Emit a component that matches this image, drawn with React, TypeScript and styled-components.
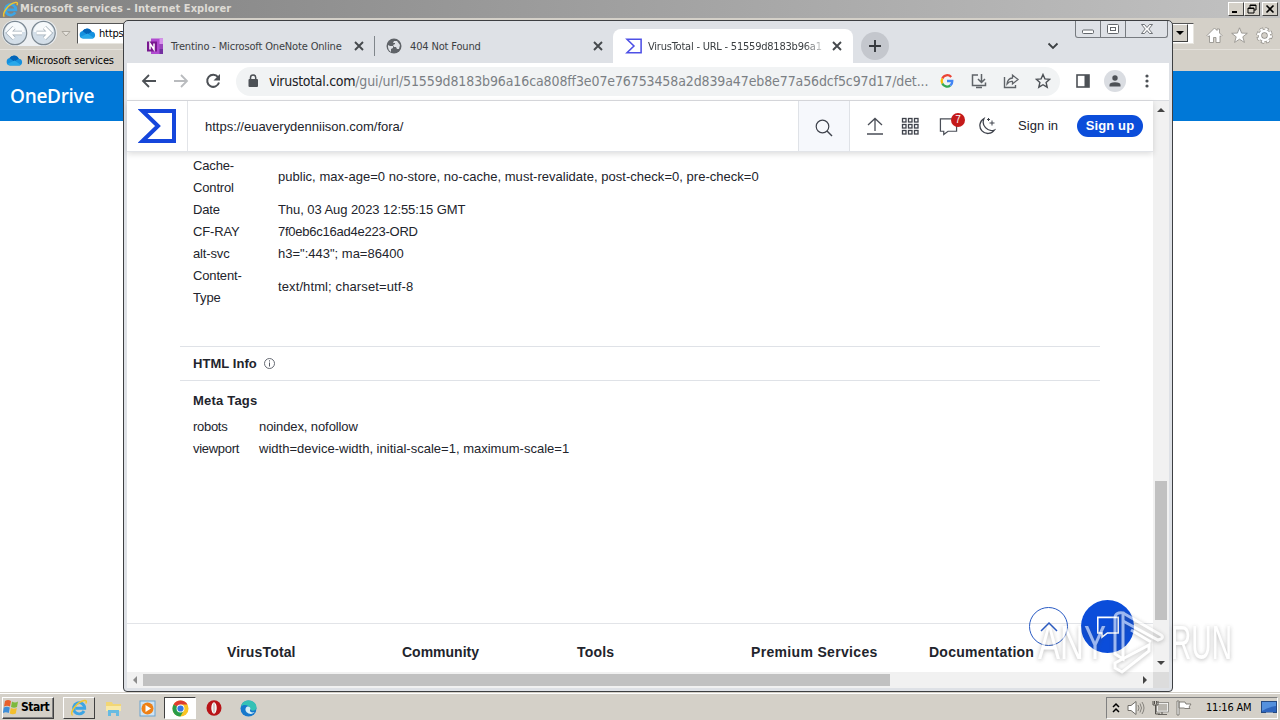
import React from 'react';
import styled, { createGlobalStyle } from 'styled-components';

const Global = createGlobalStyle`
  * { box-sizing: border-box; }
  html, body { margin: 0; padding: 0; overflow: hidden; }
  body { font-family: "DejaVu Sans Condensed", "DejaVu Sans", sans-serif; font-size: 11px; color: #000; }
  svg { display: block; flex: none; }
`;

const tahoma = '"DejaVu Sans Condensed", "DejaVu Sans", sans-serif';
const arial = '"Liberation Sans", Arial, sans-serif';

const Desktop = styled.div`
  position: relative; width: 1280px; height: 720px; overflow: hidden;
  display: flex; flex-direction: column; background: #fff;
`;
const Label = styled.span<{ $track?: number }>`
  white-space: pre; letter-spacing: ${p => p.$track ?? 0}px;
`;

/* Internet Explorer window */
const IeTitle = styled.div`
  height: 18px; flex: none; display: flex; align-items: center; padding: 0 2px 0 2px;
  background: linear-gradient(90deg, #808080, #c2c2c2); color: #dedbd5;
  font: bold 11px ${tahoma};
`;
const IeTitleText = styled(Label)` flex: 1; margin: -1px 0 0 1px; `;
const IeButton = styled.div<{ $gap?: number }>`
  width: 16px; height: 14px; margin-left: ${p => p.$gap ?? 0}px; background: #d4d0c8;
  border: 1px solid; border-color: #fff #404040 #404040 #fff;
  display: flex; align-items: center; justify-content: center;
`;
const IeNav = styled.div`
  height: 31px; flex: none; display: flex; align-items: center; background: #d4d0c8; padding-left: 2px;
`;
const NavCircles = styled.div` width: 72px; height: 30px; flex: none; margin-top: -1px; `;
const AddressBox = styled.div`
  width: 1117px; height: 21px; margin: 0 0 1px 3px; flex: none; display: flex; align-items: center;
  background: #fff; border: 1px solid; border-color: #555 #e8e6e0 #e8e6e0 #555; font-size: 11px; padding-left: 1px;
`;
const AddressText = styled(Label)` margin-left: 3px; flex: 1; `;
const DropButton = styled.div`
  width: 17px; height: 18px; margin-right: 5px; background: #d4d0c8;
  border: 1px solid; border-color: #fff #404040 #404040 #fff;
  display: flex; align-items: center; justify-content: center;
`;
const IeTools = styled.div` display: flex; gap: 8px; margin: 3px 0 0 12px; `;
const Favorites = styled.div`
  height: 22px; flex: none; display: flex; align-items: center; padding: 0 0 1px 6px; gap: 4px;
  background: #d4d0c8; border-top: 1px solid #e4e1db;
`;
const BlueBar = styled.div`
  height: 50px; flex: none; background: #0078d7; color: #fff; display: flex; align-items: center;
  padding: 0 0 0 10px; font: 600 19px "Open Sans", "Noto Sans", sans-serif;
`;
const IePage = styled.div` flex: 1; background: #fff; `;

/* Taskbar */
const Taskbar = styled.div`
  height: 28px; flex: none; display: flex; align-items: center; padding: 3px 2px 0 2px;
  background: #d4d0c8; border-top: 1px solid #d4d0c8; box-shadow: inset 0 1px #fff;
`;
const TaskButton = styled.div<{ $w: number; $mode: 'up' | 'down' | 'flat' }>`
  width: ${p => p.$w}px; height: 22px; flex: none; display: flex; align-items: center; justify-content: center;
  border: 1px solid;
  border-color: ${p => p.$mode === 'up' ? '#fff #404040 #404040 #fff' : p.$mode === 'down' ? '#404040 #fff #fff #404040' : 'transparent'};
  background: ${p => p.$mode === 'down' ? '#fff' : 'transparent'};
`;
const StartButton = styled(TaskButton)`
  gap: 2px; margin-right: 9px; justify-content: flex-start; font: bold 12px ${tahoma}; box-shadow: inset -1px -1px #808080;
  padding-bottom: 2px;
`;
const Tray = styled.div`
  width: 172px; height: 22px; margin-left: auto; display: flex; align-items: center;
  border: 1px solid; border-color: #808080 #fff #fff #808080; padding: 0 0 1px 5px;
`;
const TrayIcons = styled.div` display: flex; align-items: center; gap: 7px; `;
const Clock = styled(Label)` margin: 0 9px 0 13px; width: 46px; font-size: 11px; `;

/* Chrome window */
const ChromeWindow = styled.div`
  position: absolute; left: 123px; top: 20px; width: 1050px; height: 672px;
  border: 1px solid #3d3f42; border-radius: 5px 5px 4px 4px; background: #dee1e6;
  padding: 0 3px 3px; display: flex; flex-direction: column; overflow: hidden;
`;
const TabStrip = styled.div`
  height: 42px; flex: none; display: flex; align-items: flex-end; position: relative; color: #3c4043; font: 11px ${tahoma};
`;
const Tab = styled.div<{ $w: number; $left?: number; $active?: boolean }>`
  width: ${p => p.$w}px; height: 34px; flex: none; display: flex; align-items: center;
  padding: 0 ${p => (p.$active ? 10 : 9)}px 0 ${p => p.$left ?? 11}px; gap: ${p => (p.$active ? 6 : 8)}px;
  background: ${p => (p.$active ? '#fff' : 'transparent')};
  border-radius: 8px 8px 0 0;
`;
const TabTitle = styled(Label)<{ $fade?: boolean }>`
  flex: 1;
  mask-image: ${p => (p.$fade ? 'linear-gradient(90deg, #000 88%, rgba(0,0,0,.25) 98%)' : 'none')};
`;
const TabSeparator = styled.div` width: 1px; height: 20px; margin-bottom: 7px; background: #80868b; `;
const NewTab = styled.div`
  width: 28px; height: 28px; margin: 0 0 3px 8px; border-radius: 50%; background: #c4c7cd;
  display: flex; align-items: center; justify-content: center;
`;
const TabSearch = styled.div` margin: 0 0 12px 158px; `;
const WindowControls = styled.div`
  position: absolute; right: 1px; top: 0; height: 17px; display: flex;
  border: 1px solid #777b80; border-top: 0; border-radius: 0 0 3px 3px;
`;
const WindowControl = styled.div<{ $w: number }>`
  width: ${p => p.$w}px; display: flex; align-items: center; justify-content: center;
  & + & { border-left: 1px solid #777b80; }
`;
const Toolbar = styled.div`
  height: 38px; flex: none; display: flex; align-items: center; background: #fff;
  border-bottom: 1px solid #dadce0; padding-left: 14px;
`;
const NavIcons = styled.div` display: flex; gap: 16px; margin: -1px 15px 0 0; `;
const Omnibox = styled.div`
  width: 824px; height: 29px; border-radius: 15px; background: #f1f3f4; display: flex; align-items: center; padding: 0 9px 1px 11px;
`;
const Url = styled.div` flex: 1; margin-left: 10px; white-space: pre; font: 14px ${tahoma}; letter-spacing: -0.11px; color: #7b7f84; `;
const UrlHost = styled.span` color: #202124; letter-spacing: -0.3px; `;
const OmniIcons = styled.div` display: flex; gap: 14px; `;
const ToolIcons = styled.div` display: flex; align-items: center; gap: 14px; margin: -1px 0 0 16px; `;
const Avatar = styled.div`
  width: 22px; height: 22px; border-radius: 50%; background: #dadde2; display: flex; align-items: center; justify-content: center;
`;
const Viewport = styled.div` flex: 1; min-height: 0; display: flex; background: #fff; `;
const Page = styled.div`
  width: 1026px; flex: none; display: flex; flex-direction: column; font: 13px ${arial}; color: #22242c; background: #fff; position: relative;
`;
const Header = styled.div`
  height: 51px; flex: none; display: flex; align-items: center; border-bottom: 1px solid #e2e4e8; box-shadow: 0 2px 6px rgba(0,0,0,.14);
`;
const LogoCell = styled.div`
  width: 61px; height: 50px; border-right: 1px solid #e2e4e8; padding: 8px 0 0 11px;
`;
const Query = styled.div` width: 610px; padding-left: 17px; `;
const SearchCell = styled.div`
  width: 52px; height: 50px; border: 1px solid #dfe2e7; border-width: 0 1px; background: #f6f8fc;
  display: flex; align-items: center; justify-content: center; padding-top: 3px;
`;
const HeaderIcons = styled.div` display: flex; align-items: center; gap: 17px; margin-left: 16px; `;
const Chat = styled.div` position: relative; margin: 0 3px 0 3px; `;
const Badge = styled.div`
  position: absolute; left: 12px; top: -4px; width: 14px; height: 14px; border-radius: 50%; background: #c51a1a; color: #fff;
  font: 10px/14px ${arial}; text-align: center;
`;
const SignIn = styled(Label)` width: 41px; margin: -1px 0 0 22px; font-size: 13px; `;
const SignUp = styled.div`
  width: 66px; height: 22px; border-radius: 11px; background: #0b4dda; color: #fff; margin-left: 18px;
  font: bold 13px/22px ${arial}; text-align: center; letter-spacing: .1px;
`;
const Content = styled.div` height: 471px; padding: 3px 53px 0; flex: none; `;
const Row = styled.div` display: flex; align-items: center; padding-left: 13px; line-height: 22px; `;
const Key = styled.div<{ $w: number; $track?: number }>`
  width: ${p => p.$w}px; flex: none; letter-spacing: ${p => p.$track ?? -0.15}px;
`;
const Section = styled.div`
  height: 35px; margin-top: 37px; padding: 0 0 1px 13px; display: flex; align-items: center; gap: 7px;
  border-top: 1px solid #dfe2e7; border-bottom: 1px solid #dfe2e7; font-weight: bold;
`;
const SubTitle = styled.div` height: 35px; padding: 9px 0 0 13px; line-height: 22px; font-weight: bold; `;
const Footer = styled.div`
  flex: 1; border-top: 1px solid #e2e4e8; display: flex; font-size: 14px; font-weight: bold; padding: 19px 0 0 100px; line-height: 18px;
`;
const FooterColumn = styled.div<{ $w: number; $track: number }>`
  width: ${p => p.$w}px; flex: none; white-space: nowrap; letter-spacing: ${p => p.$track}px;
`;
const Floating = styled.div`
  position: absolute; left: 902px; top: 499px; display: flex; align-items: center; gap: 13px;
`;
const UpButton = styled.div`
  width: 39px; height: 39px; border: 1px solid #2a5bc4; border-radius: 50%; display: flex; align-items: center; justify-content: center;
`;
const ChatButton = styled.div`
  width: 53px; height: 53px; border-radius: 50%; background: #0b4dda; display: flex; align-items: center; justify-content: center;
`;
const VScroll = styled.div`
  width: 16px; flex: none; background: #f1f1f1; display: flex; flex-direction: column; align-items: center; padding: 5px 0;
`;
const VThumb = styled.div` width: 12px; height: 139px; margin: 367px 0 auto; background: #c1c1c1; `;
const HScroll = styled.div`
  height: 16px; flex: none; background: #f1f1f1; display: flex; align-items: center; padding-left: 4px;
`;
const HThumb = styled.div` width: 747px; height: 12px; margin: 0 auto 0 4px; background: #c1c1c1; `;
const Corner = styled.div` width: 16px; height: 16px; margin-left: 4px; background: #dcdcdc; `;

const Watermark = styled.div`
  position: absolute; left: 1034px; top: 606px; width: 204px; height: 70px; opacity: .6;
  filter: drop-shadow(0 1px 2px rgba(70,70,70,.6));
`;

const Cloud = () => (
  <svg width="17" height="12" viewBox="0 0 17 12">
    <path d="M4 11.500a3.800 3.800 0 0 1-.300-7.500A5.200 5.200 0 0 1 12.800 4.800 3.400 3.400 0 0 1 13.500 11.500z" fill="#1490df" />
    <path d="M3.500 4A5.200 5.200 0 0 1 12.800 4.800L8 7.500z" fill="#0364b8" />
    <path d="M1.200 10l7.300-3.500 6.500 4.500-1.500.500H4z" fill="#28a8ea" />
  </svg>
);
const IeLogo = ({ size }: { size: number }) => (
  <svg width={size} height={size} viewBox="0 0 18 18">
    <path d="M14 12A5.600 5.600 0 1 1 14.700 9.300H5.200" fill="none" stroke="#3da5e4" strokeWidth="2.900" />
    <path d="M2.500 16.500C-1 14 7 2.500 14.500 1.500c2-.200 2.300 1 1.300 3" fill="none" stroke="#f1c62f" strokeWidth="1.500" />
  </svg>
);
const VtLogo = ({ w, h, c, s }: { w: number; h: number; c: string; s: number }) => (
  <svg width={w} height={h} viewBox="0 0 38 34">
    <path d="M4.500 2H36v30H4.500L20 17z" fill="none" stroke={c} strokeWidth={s} />
  </svg>
);
const Close = () => (
  <svg width="12" height="12" viewBox="0 0 12 12"><path d="M2 2l8 8M10 2l-8 8" stroke="#45494d" strokeWidth="1.900" /></svg>
);
const Triangle = ({ dir, c = '#444' }: { dir: 'up' | 'down' | 'left' | 'right'; c?: string }) => {
  const d = { up: 'M0 6h8L4 2z', down: 'M0 2h8L4 6z', left: 'M6 0v8L2 4z', right: 'M2 0v8l4-4z' }[dir];
  return <svg width="8" height="8" viewBox="0 0 8 8"><path d={d} fill={c} /></svg>;
};
const ChatShape = ({ size, c }: { size: number; c: string }) => (
  <svg width={size} height={size} viewBox="0 0 20 20"><path d="M1.500 2h17v13H9.500L5 18.500V15H1.500z" fill="none" stroke={c} strokeWidth="1.300" /></svg>
);
const Chrome = () => (
  <svg width="17" height="17" viewBox="0 0 18 18">
    <circle cx="9" cy="9" r="8.500" fill="#f9c425" />
    <path d="M9 9L1.640 4.750A8.500 8.500 0 0 1 16.360 4.750H9z" fill="#de3b30" />
    <path d="M9 9L1.640 4.750A8.500 8.500 0 0 0 8.800 17.500L12.500 11z" fill="#2a9d4a" />
    <circle cx="9" cy="9" r="4.200" fill="#fff" /><circle cx="9" cy="9" r="3.300" fill="#3478e5" />
  </svg>
);

const headers: [React.ReactNode, string, number][] = [
  [<>Cache-<br />Control</>, 'public, max-age=0 no-store, no-cache, must-revalidate, post-check=0, pre-check=0', 0.025],
  ['Date', 'Thu, 03 Aug 2023 12:55:15 GMT', -0.07],
  ['CF-RAY', '7f0eb6c16ad4e223-ORD', -0.24],
  ['alt-svc', 'h3=":443"; ma=86400', 0],
  [<>Content-<br />Type</>, 'text/html; charset=utf-8', 0.11],
];
const metas: [string, string, number][] = [
  ['robots', 'noindex, nofollow', -0.1],
  ['viewport', 'width=device-width, initial-scale=1, maximum-scale=1', 0.01],
];
const footer: [string, number, number][] = [
  ['VirusTotal', 175, 0.15], ['Community', 175, 0], ['Tools', 174, 0.2], ['Premium Services', 178, 0.33], ['Documentation', 112, 0.25],
];

export default function App() {
  return (
    <Desktop>
      <Global />
      <IeTitle>
        <IeLogo size={17} />
        <IeTitleText $track={0.07}>Microsoft services - Internet Explorer</IeTitleText>
        <IeButton><svg width="10" height="10"><path d="M1 8h5" stroke="#000" strokeWidth="2" /></svg></IeButton>
        <IeButton><svg width="10" height="10"><path d="M3 1h6v5H7M3 1v3" fill="none" stroke="#000" /><path d="M1 4h6v5H1zM1 4.500h6M3 1.500h6" fill="none" stroke="#000" /></svg></IeButton>
        <IeButton $gap={2}><svg width="10" height="10"><path d="M1.500 1.500l7 7M8.500 1.500l-7 7" stroke="#000" strokeWidth="1.600" /></svg></IeButton>
      </IeTitle>
      <IeNav>
        <NavCircles>
          <svg width="72" height="30" viewBox="0 0 72 30">
            <path d="M13 2h29a13 13 0 0 1 0 26H13A13 13 0 0 1 13 2z" fill="#eceff2" />
            {[13, 41.500].map(x => (
              <g key={x}>
                <circle cx={x} cy="15" r="11.700" fill="#d3dee8" stroke="#7b8791" strokeWidth="1.200" />
                <path d={`M${x - 10} 14a10 10 0 0 1 20 0z`} fill="#f6f9fb" />
              </g>
            ))}
            <path d="M20 15H7M12 9.500L6.500 15l5.500 5.500" fill="none" stroke="#a3afb9" strokeWidth="4.400" />
            <path d="M20 15H7M12 9.500L6.500 15l5.500 5.500" fill="none" stroke="#fff" strokeWidth="3" />
            <path d="M34.500 15h13M42.500 9.500L48 15l-5.500 5.500" fill="none" stroke="#a3afb9" strokeWidth="4.400" />
            <path d="M34.500 15h13M42.500 9.500L48 15l-5.500 5.500" fill="none" stroke="#fff" strokeWidth="3" />
            <path d="M60 13.500h8l-4 4.500z" fill="#e8e5df" stroke="#aaa69e" />
          </svg>
        </NavCircles>
        <AddressBox>
          <Cloud /><AddressText $track={-0.2}>https://onedrive.live.com</AddressText>
          <DropButton><Triangle dir="down" c="#000" /></DropButton>
        </AddressBox>
        <IeTools>
          <svg width="17" height="17" viewBox="0 0 17 17"><path d="M1 8.500L8.500 1 11 3.500V2h2.500v4L16 8.500l-1 1-1-.700V15.500h-4v-5H7.500v5h-4V8.800l-1.500.700z" fill="#fff" stroke="#8d8a85" strokeWidth=".8" /></svg>
          <svg width="17" height="17" viewBox="0 0 17 17"><path d="M8.500.800l2.100 5.300 5.700.200-4.500 3.500 1.600 5.600-4.900-3.200-4.900 3.200 1.600-5.600L.700 6.300l5.700-.200z" fill="#fff" stroke="#8d8a85" strokeWidth=".8" /></svg>
          <svg width="17" height="17" viewBox="0 0 17 17"><circle cx="8.500" cy="8.500" r="6.500" fill="none" stroke="#8d8a85" strokeWidth="3.400" strokeDasharray="3.100 2" /><circle cx="8.500" cy="8.500" r="4.300" fill="none" stroke="#8d8a85" strokeWidth="4" /><circle cx="8.500" cy="8.500" r="6.500" fill="none" stroke="#fff" strokeWidth="2" strokeDasharray="2.500 2.600" /><circle cx="8.500" cy="8.500" r="4.500" fill="none" stroke="#fff" strokeWidth="2.600" /><circle cx="8.500" cy="8.500" r="2.300" fill="#d4d0c8" /></svg>
        </IeTools>
      </IeNav>
      <Favorites><Cloud /><Label $track={-0.1}>Microsoft services</Label></Favorites>
      <BlueBar><Label $track={-0.3}>OneDrive</Label></BlueBar>
      <IePage />
      <Taskbar>
        <StartButton $w={52} $mode="up">
          <svg width="16" height="16" viewBox="0 0 16 16">
            <path d="M2 2q3-2 6 0L7 7.500Q4 6 1 7.500z" fill="#e8602c" /><path d="M9 2.500q3 2 6 0L14 8q-3 1.500-6 0z" fill="#7db93c" />
            <path d="M.800 8.500q3-1.500 6 0L5.800 14q-3-1.500-6 0z" fill="#3f8ed8" /><path d="M7.800 9q3 1.500 6 0l-1 5.500q-3 1.500-6 0z" fill="#f4bf2c" />
          </svg>
          <Label $track={-0.5}>Start</Label>
        </StartButton>
        <TaskButton $w={32} $mode="up"><IeLogo size={18} /></TaskButton>
        <TaskButton $w={36} $mode="flat">
          <svg width="17" height="17" viewBox="0 0 17 17"><path d="M1 2h6l1 2h8v7H1z" fill="#f2d675" /><path d="M1 6h15v5H1z" fill="#f9e9a6" /><path d="M3 16v-6h11v6h-3v-3H6v3z" fill="#66bbe2" /></svg>
        </TaskButton>
        <TaskButton $w={33} $mode="flat">
          <svg width="17" height="17" viewBox="0 0 17 17"><rect x="1" y="1" width="15" height="15" fill="#cfe4f4" stroke="#6ba3cf" /><circle cx="8.500" cy="8.500" r="6" fill="#ee8117" /><path d="M6.500 5v7l5.500-3.500z" fill="#fff" /></svg>
        </TaskButton>
        <TaskButton $w={32} $mode="down"><Chrome /></TaskButton>
        <TaskButton $w={36} $mode="flat">
          <svg width="16" height="16" viewBox="0 0 16 16"><ellipse cx="8" cy="8" rx="7.500" ry="7.800" fill="#b81418" /><ellipse cx="8" cy="8" rx="2.700" ry="5.700" fill="#fff" /><ellipse cx="8" cy="8" rx="1.300" ry="5" fill="#d4cfcb" /></svg>
        </TaskButton>
        <TaskButton $w={33} $mode="flat">
          <svg width="17" height="17" viewBox="0 0 17 17"><circle cx="8.500" cy="8.500" r="8" fill="#1678cc" /><path d="M1 6.500C2 2 5.500.500 8.500.500c5 0 8 3.500 8 7 0 4-6 4-6 1.500C9 5 4 3.500 1 6.500z" fill="#35c1b5" /><path d="M10.500 9c0-2-2-3-4-2-2 2-1 5 2 6.500 3 1 5 0 6-1.500-2 1-6 0-4-3z" fill="#d6edf6" /></svg>
        </TaskButton>
        <Tray>
          <TrayIcons>
            <svg width="8" height="12" viewBox="0 0 8 12"><path d="M1 5l3-3 3 3M1 10l3-3 3 3" fill="none" stroke="#000" strokeWidth="1.500" /></svg>
            <svg width="18" height="16" viewBox="0 0 18 16"><path d="M1 5.500h3L9 1.500v13L4 10.500H1z" fill="#fff" stroke="#6f6c67" /><path d="M11 5q2 3 0 6M13 3.500q3 4.500 0 9M15 2q4 6 0 12" fill="none" stroke="#85827c" /></svg>
            <svg width="17" height="16" viewBox="0 0 17 16"><rect x="5" y="3" width="11" height="8.500" fill="#b9b6af" stroke="#fff" strokeWidth="1.500" /><path d="M6 14.500h9M10 12v2" stroke="#68655f" strokeWidth="1.200" /><path d="M1 1v4h5V1M3.500 5v9H8M4.500 1v3M2.500 1v3" fill="none" stroke="#53504b" /><rect x="4.500" y="2.500" width="12" height="9.500" fill="none" stroke="#6b6862" strokeWidth=".7" /></svg>
            <svg width="17" height="16" viewBox="0 0 17 16"><path d="M1 1h2v14H1zM3 2h6l1 2h5l-2 3 1 1.500H9L8 8H3z" fill="#fff" stroke="#77746e" strokeWidth=".9" /></svg>
          </TrayIcons>
          <Clock $track={-0.2}>11:16 AM</Clock>
          <svg width="16" height="15" viewBox="0 0 16 15"><rect x=".5" y="1.500" width="15" height="11" fill="#2e65bd" stroke="#254a82" /><path d="M1 2h14v4Q7 7 1 11z" fill="#5490dd" /><path d="M5 13.500h7" stroke="#ddd" strokeWidth="2" /></svg>
        </Tray>
      </Taskbar>

      <ChromeWindow>
        <TabStrip>
          <Tab $w={247} $left={20}>
            <svg width="16" height="17" viewBox="0 0 16 17"><path d="M4 .500h12V16H4z" fill="#b04ad0" /><path d="M12.500.500H16V6h-3.500z" fill="#d792ec" /><path d="M12.500 6H16v5h-3.500z" fill="#9a43bd" /><path d="M12.500 11H16v5h-3.500z" fill="#732fa0" /><rect y="3.500" width="10" height="10" fill="#78178f" /><path d="M3 11.500v-6l4 6v-6" fill="none" stroke="#fff" strokeWidth="1.500" /></svg>
            <TabTitle $track={-0.16}>Trentino - Microsoft OneNote Online</TabTitle><Close />
          </Tab>
          <TabSeparator />
          <Tab $w={238}>
            <svg width="16" height="16" viewBox="0 0 16 16"><circle cx="8" cy="8" r="7.500" fill="#5f6368" /><path d="M2 7l2 1h3v2l-2 1v3Q1.500 12 2 7zM8 3h3l3 4-1 4h-2l-1-2H8L7 7l2-1V5H7z" fill="#dee1e6" /></svg>
            <TabTitle $track={-0.15}>404 Not Found</TabTitle><Close />
          </Tab>
          <Tab $w={240} $left={12} $active>
            <VtLogo w={17} h={16} c="#4e50e6" s={3.500} />
            <TabTitle $track={-0.22} $fade>VirusTotal - URL - 51559d8183b96a1</TabTitle><Close />
          </Tab>
          <NewTab><svg width="14" height="14" viewBox="0 0 14 14"><path d="M7 1v12M1 7h12" stroke="#36393d" strokeWidth="1.900" /></svg></NewTab>
          <TabSearch><svg width="12" height="10" viewBox="0 0 12 10"><path d="M1.500 2.500L6 7l4.500-4.500" fill="none" stroke="#3c4043" strokeWidth="1.800" /></svg></TabSearch>
          <WindowControls>
            <WindowControl $w={24}><svg width="12" height="12" viewBox="0 0 12 12"><rect x=".5" y="7" width="11" height="3.500" rx="1" fill="#fff" stroke="#62666b" /></svg></WindowControl>
            <WindowControl $w={25}><svg width="12" height="12" viewBox="0 0 12 12"><rect x=".5" y="1.500" width="11" height="9" rx="1" fill="#fff" stroke="#62666b" /><rect x="3.500" y="4.500" width="5" height="3" fill="none" stroke="#62666b" /></svg></WindowControl>
            <WindowControl $w={42}><svg width="12" height="12" viewBox="0 0 12 12"><path d="M.500 1.500h3L6 4.500l2.500-3h3L7.800 6l3.700 4.500h-3L6 7.500l-2.500 3h-3L4.200 6z" fill="#fff" stroke="#62666b" strokeWidth=".9" /></svg></WindowControl>
          </WindowControls>
        </TabStrip>
        <Toolbar>
          <NavIcons>
            <svg width="16" height="16" viewBox="0 0 16 16"><path d="M15 8H2M8 2L2 8l6 6" fill="none" stroke="#4d5156" strokeWidth="1.800" /></svg>
            <svg width="16" height="16" viewBox="0 0 16 16"><path d="M1 8h13M8 2l6 6-6 6" fill="none" stroke="#b9bbbe" strokeWidth="1.800" /></svg>
            <svg width="16" height="16" viewBox="0 0 16 16"><path d="M13 4.200A6 6 0 1 0 14 9.500" fill="none" stroke="#4d5156" strokeWidth="2" /><path d="M15 1v6.500H8.500z" fill="#4d5156" /></svg>
          </NavIcons>
          <Omnibox>
            <svg width="12" height="14" viewBox="0 0 12 14"><rect x="1.500" y="5" width="9.500" height="8" rx="1" fill="#4d5156" /><path d="M3.500 6V3.500a2.600 2.600 0 0 1 5.200 0V6" fill="none" stroke="#4d5156" strokeWidth="1.500" /></svg>
            <Url><UrlHost>virustotal.com</UrlHost>/gui/url/51559d8183b96a16ca808ff3e07e76753458a2d839a47eb8e77a56dcf5c97d17/det...</Url>
            <OmniIcons>
              <svg width="18" height="16" viewBox="0 0 18 16"><g fill="none" strokeWidth="2.300"><path d="M12.200 4A5.300 5.300 0 0 0 3.300 5.500" stroke="#ea4335" /><path d="M3.300 5.500a5.300 5.300 0 0 0 0 5" stroke="#fbbc04" /><path d="M3.300 10.500a5.300 5.300 0 0 0 8 2" stroke="#34a853" /><path d="M11.300 12.500a5.300 5.300 0 0 0 2-4.500H8" stroke="#4285f4" /></g></svg>
              <svg width="18" height="16" viewBox="0 0 18 16"><path d="M7 2H1.500v10.500h13V9.500M5 14.500h6M10.500 1v8M7 6l3.500 3.500L14 6" fill="none" stroke="#5f6368" strokeWidth="1.500" /></svg>
              <svg width="18" height="16" viewBox="0 0 18 16"><path d="M1.500 4v10.500h11V12" fill="none" stroke="#5f6368" strokeWidth="1.400" /><path d="M9.500 5V2l5.500 4.500-5.500 4.500V8.500Q6.500 8 4 11q.500-5.500 5.500-6z" fill="none" stroke="#5f6368" strokeWidth="1.300" /></svg>
              <svg width="16" height="16" viewBox="0 0 16 16"><path d="M8 1.500l1.900 4.400 4.800.400-3.600 3.200 1.100 4.700L8 11.700l-4.200 2.500 1.100-4.700-3.600-3.200 4.800-.400z" fill="none" stroke="#4d5156" strokeWidth="1.400" /></svg>
            </OmniIcons>
          </Omnibox>
          <ToolIcons>
            <svg width="14" height="14" viewBox="0 0 14 14"><rect x="1" y="1" width="12" height="12" fill="#fff" stroke="#4d5156" strokeWidth="1.600" /><path d="M8.500 1H13v12H8.500z" fill="#4d5156" /></svg>
            <Avatar><svg width="12" height="12" viewBox="0 0 12 12"><circle cx="6" cy="3" r="2.700" fill="#4d5156" /><path d="M.500 11.500V10q0-2.700 5.500-2.700t5.500 2.700v1.500z" fill="#4d5156" /></svg></Avatar>
            <svg width="14" height="14" viewBox="0 0 14 14"><circle cx="7" cy="2" r="1.600" fill="#4d5156" /><circle cx="7" cy="7" r="1.600" fill="#4d5156" /><circle cx="7" cy="12" r="1.600" fill="#4d5156" /></svg>
          </ToolIcons>
        </Toolbar>
        <Viewport>
          <Page>
            <Header>
              <LogoCell><VtLogo w={38} h={34} c="#1546dc" s={4} /></LogoCell>
              <Query><Label $track={-0.01}>https://euaverydenniison.com/fora/</Label></Query>
              <SearchCell><svg width="18" height="18" viewBox="0 0 18 18"><circle cx="7.500" cy="7.500" r="6.300" fill="none" stroke="#3f434c" strokeWidth="1.200" /><path d="M12 12l5 5" stroke="#3f434c" strokeWidth="1.400" /></svg></SearchCell>
              <HeaderIcons>
                <svg width="18" height="18" viewBox="0 0 18 18"><path d="M9 14V1.500M2 8l7-6.500L16 8M1 17h16" fill="none" stroke="#4a4e57" strokeWidth="1.300" /></svg>
                <svg width="18" height="18" viewBox="0 0 18 18">{[1, 7, 13].flatMap(x => [1, 7, 13].map(y => <rect key={`${x}-${y}`} x={x + .5} y={y + .5} width="3.500" height="3.500" fill="none" stroke="#3f434c" strokeWidth="1.300" />))}</svg>
                <Chat><ChatShape size={19} c="#4a4e57" /><Badge>7</Badge></Chat>
                <svg width="18" height="18" viewBox="0 0 18 18"><path d="M6 1.500A8 8 0 1 0 16.500 13 8.500 8.500 0 0 1 6 1.500z" fill="none" stroke="#3f434c" strokeWidth="1.300" /><path d="M14 3.500v5M11.500 6h5M10.500 1v3M9 2.500h3" stroke="#3f434c" /></svg>
              </HeaderIcons>
              <SignIn $track={0.05}>Sign in</SignIn>
              <SignUp>Sign up</SignUp>
            </Header>
            <Content>
              {headers.map(([k, v, t], i) => <Row key={i}><Key $w={85}>{k}</Key><Label $track={t}>{v}</Label></Row>)}
              <Section><Label $track={0.05}>HTML Info</Label><svg width="11" height="11" viewBox="0 0 11 11"><circle cx="5.500" cy="5.500" r="5" fill="none" stroke="#555963" strokeWidth=".9" /><path d="M5.500 4.500v4M5.500 2.300v1.200" stroke="#555963" /></svg></Section>
              <SubTitle><Label $track={0.2}>Meta Tags</Label></SubTitle>
              {metas.map(([k, v, t]) => <Row key={k}><Key $w={66} $track={-0.3}>{k}</Key><Label $track={t}>{v}</Label></Row>)}
            </Content>
            <Footer>{footer.map(([t, w, s]) => <FooterColumn key={t} $w={w} $track={s}>{t}</FooterColumn>)}</Footer>
            <Floating>
              <UpButton><svg width="18" height="11" viewBox="0 0 18 11"><path d="M1 10l8-8 8 8" fill="none" stroke="#2a5bc4" strokeWidth="1.500" /></svg></UpButton>
              <ChatButton><ChatShape size={24} c="#fff" /></ChatButton>
            </Floating>
          </Page>
          <VScroll><Triangle dir="up" /><VThumb /><Triangle dir="down" /></VScroll>
        </Viewport>
        <HScroll><Triangle dir="left" c="#8c8c8c" /><HThumb /><Triangle dir="right" /><Corner /></HScroll>
      </ChromeWindow>

      <Watermark>
        <svg width="204" height="70" viewBox="0 0 204 70">
          <g fill="#fff" fontFamily="Liberation Sans, sans-serif" fontSize="48">
            <text x="4" y="53" textLength="68" lengthAdjust="spacingAndGlyphs">ANY</text>
            <text x="137" y="53" textLength="61" lengthAdjust="spacingAndGlyphs">RUN</text>
          </g>
          <g fill="none" stroke="#fff" strokeWidth="3">
            <path d="M89 7v46l-8-5V12q0-6 8-5z" />
            <path d="M89 7l38 22q3 2 0 4l-3 1-35-19M97 24l20 12M81 57l34-18v6L88 66l-7-4z" />
          </g>
        </svg>
      </Watermark>
    </Desktop>
  );
}
